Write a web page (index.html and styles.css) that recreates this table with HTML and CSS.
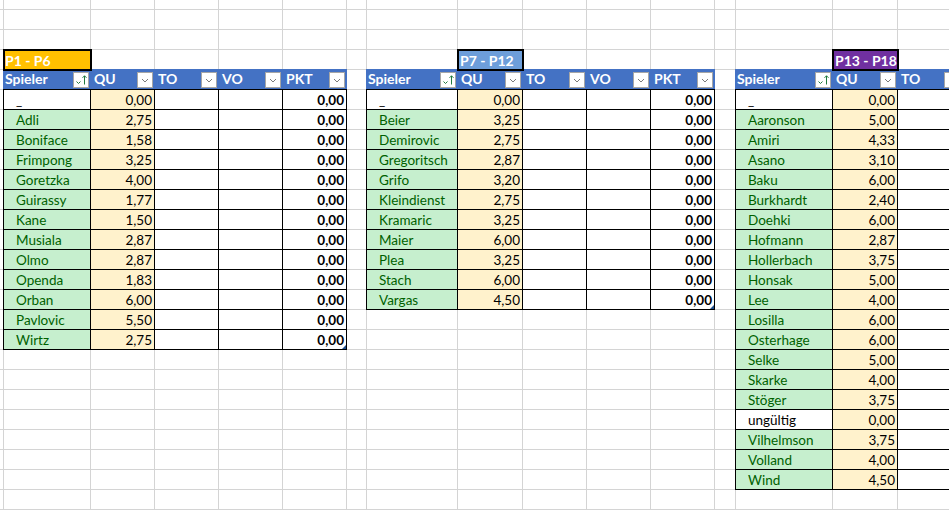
FILE: index.html
```html
<!DOCTYPE html>
<html lang="de">
<head>
<meta charset="utf-8">
<title>Spieler</title>
<link rel="stylesheet" href="styles.css">
</head>
<body>
<div class="sheet">
  <div class="lines">
    <span></span><span></span><span></span><span></span><span></span><span></span>
    <span></span><span></span><span></span><span></span><span></span><span></span>
    <span></span><span></span><span></span><span></span><span></span><span></span>
  </div>

  <!-- Table 1 -->
  <div class="tbl t1">
    <div class="thead">
      <div class="th">Spieler<svg class="btn" viewBox="0 0 16 16"><rect x="0.5" y="0.5" width="15" height="15" fill="#fff" stroke="#a6a6a6"/><path d="M3.5 9.5l2 2 2-2" fill="none" stroke="#1e7a3c"/><path d="M11.5 12.5V3.8M9.5 5.8l2-2 2 2" fill="none" stroke="#1e7a3c"/></svg></div>
      <div class="th">QU<svg class="btn" viewBox="0 0 16 16"><rect x="0.5" y="0.5" width="15" height="15" fill="#fff" stroke="#a6a6a6"/><path d="M5 7l3 3 3-3" fill="none" stroke="#7a7a7a"/></svg></div>
      <div class="th">TO<svg class="btn" viewBox="0 0 16 16"><rect x="0.5" y="0.5" width="15" height="15" fill="#fff" stroke="#a6a6a6"/><path d="M5 7l3 3 3-3" fill="none" stroke="#7a7a7a"/></svg></div>
      <div class="th">VO<svg class="btn" viewBox="0 0 16 16"><rect x="0.5" y="0.5" width="15" height="15" fill="#fff" stroke="#a6a6a6"/><path d="M5 7l3 3 3-3" fill="none" stroke="#7a7a7a"/></svg></div>
      <div class="th">PKT<svg class="btn" viewBox="0 0 16 16"><rect x="0.5" y="0.5" width="15" height="15" fill="#fff" stroke="#a6a6a6"/><path d="M5 7l3 3 3-3" fill="none" stroke="#7a7a7a"/></svg></div>
    </div>
    <div class="tbody">
      <div class="td name plain">_</div><div class="td qu">0,00</div><div class="td"></div><div class="td"></div><div class="td pkt">0,00</div>
      <div class="td name">Adli</div><div class="td qu">2,75</div><div class="td"></div><div class="td"></div><div class="td pkt">0,00</div>
      <div class="td name">Boniface</div><div class="td qu">1,58</div><div class="td"></div><div class="td"></div><div class="td pkt">0,00</div>
      <div class="td name">Frimpong</div><div class="td qu">3,25</div><div class="td"></div><div class="td"></div><div class="td pkt">0,00</div>
      <div class="td name">Goretzka</div><div class="td qu">4,00</div><div class="td"></div><div class="td"></div><div class="td pkt">0,00</div>
      <div class="td name">Guirassy</div><div class="td qu">1,77</div><div class="td"></div><div class="td"></div><div class="td pkt">0,00</div>
      <div class="td name">Kane</div><div class="td qu">1,50</div><div class="td"></div><div class="td"></div><div class="td pkt">0,00</div>
      <div class="td name">Musiala</div><div class="td qu">2,87</div><div class="td"></div><div class="td"></div><div class="td pkt">0,00</div>
      <div class="td name">Olmo</div><div class="td qu">2,87</div><div class="td"></div><div class="td"></div><div class="td pkt">0,00</div>
      <div class="td name">Openda</div><div class="td qu">1,83</div><div class="td"></div><div class="td"></div><div class="td pkt">0,00</div>
      <div class="td name">Orban</div><div class="td qu">6,00</div><div class="td"></div><div class="td"></div><div class="td pkt">0,00</div>
      <div class="td name">Pavlovic</div><div class="td qu">5,50</div><div class="td"></div><div class="td"></div><div class="td pkt">0,00</div>
      <div class="td name">Wirtz</div><div class="td qu">2,75</div><div class="td"></div><div class="td"></div><div class="td pkt last">0,00</div>
    </div>
  </div>

  <!-- Table 2 -->
  <div class="tbl t2">
    <div class="thead">
      <div class="th">Spieler<svg class="btn" viewBox="0 0 16 16"><rect x="0.5" y="0.5" width="15" height="15" fill="#fff" stroke="#a6a6a6"/><path d="M3.5 9.5l2 2 2-2" fill="none" stroke="#1e7a3c"/><path d="M11.5 12.5V3.8M9.5 5.8l2-2 2 2" fill="none" stroke="#1e7a3c"/></svg></div>
      <div class="th">QU<svg class="btn" viewBox="0 0 16 16"><rect x="0.5" y="0.5" width="15" height="15" fill="#fff" stroke="#a6a6a6"/><path d="M5 7l3 3 3-3" fill="none" stroke="#7a7a7a"/></svg></div>
      <div class="th">TO<svg class="btn" viewBox="0 0 16 16"><rect x="0.5" y="0.5" width="15" height="15" fill="#fff" stroke="#a6a6a6"/><path d="M5 7l3 3 3-3" fill="none" stroke="#7a7a7a"/></svg></div>
      <div class="th">VO<svg class="btn" viewBox="0 0 16 16"><rect x="0.5" y="0.5" width="15" height="15" fill="#fff" stroke="#a6a6a6"/><path d="M5 7l3 3 3-3" fill="none" stroke="#7a7a7a"/></svg></div>
      <div class="th">PKT<svg class="btn" viewBox="0 0 16 16"><rect x="0.5" y="0.5" width="15" height="15" fill="#fff" stroke="#a6a6a6"/><path d="M5 7l3 3 3-3" fill="none" stroke="#7a7a7a"/></svg></div>
    </div>
    <div class="tbody">
      <div class="td name plain">_</div><div class="td qu">0,00</div><div class="td"></div><div class="td"></div><div class="td pkt">0,00</div>
      <div class="td name">Beier</div><div class="td qu">3,25</div><div class="td"></div><div class="td"></div><div class="td pkt">0,00</div>
      <div class="td name">Demirovic</div><div class="td qu">2,75</div><div class="td"></div><div class="td"></div><div class="td pkt">0,00</div>
      <div class="td name">Gregoritsch</div><div class="td qu">2,87</div><div class="td"></div><div class="td"></div><div class="td pkt">0,00</div>
      <div class="td name">Grifo</div><div class="td qu">3,20</div><div class="td"></div><div class="td"></div><div class="td pkt">0,00</div>
      <div class="td name">Kleindienst</div><div class="td qu">2,75</div><div class="td"></div><div class="td"></div><div class="td pkt">0,00</div>
      <div class="td name">Kramaric</div><div class="td qu">3,25</div><div class="td"></div><div class="td"></div><div class="td pkt">0,00</div>
      <div class="td name">Maier</div><div class="td qu">6,00</div><div class="td"></div><div class="td"></div><div class="td pkt">0,00</div>
      <div class="td name">Plea</div><div class="td qu">3,25</div><div class="td"></div><div class="td"></div><div class="td pkt">0,00</div>
      <div class="td name">Stach</div><div class="td qu">6,00</div><div class="td"></div><div class="td"></div><div class="td pkt">0,00</div>
      <div class="td name">Vargas</div><div class="td qu">4,50</div><div class="td"></div><div class="td"></div><div class="td pkt last">0,00</div>
    </div>
  </div>

  <div class="tbl t3">
    <div class="thead">
      <div class="th">Spieler<svg class="btn" viewBox="0 0 16 16"><rect x="0.5" y="0.5" width="15" height="15" fill="#fff" stroke="#a6a6a6"/><path d="M3.5 9.5l2 2 2-2" fill="none" stroke="#1e7a3c"/><path d="M11.5 12.5V3.8M9.5 5.8l2-2 2 2" fill="none" stroke="#1e7a3c"/></svg></div>
      <div class="th">QU<svg class="btn" viewBox="0 0 16 16"><rect x="0.5" y="0.5" width="15" height="15" fill="#fff" stroke="#a6a6a6"/><path d="M5 7l3 3 3-3" fill="none" stroke="#7a7a7a"/></svg></div>
      <div class="th">TO<svg class="btn" viewBox="0 0 16 16"><rect x="0.5" y="0.5" width="15" height="15" fill="#fff" stroke="#a6a6a6"/><path d="M5 7l3 3 3-3" fill="none" stroke="#7a7a7a"/></svg></div>
    </div>
    <div class="tbody">
      <div class="td name plain">_</div><div class="td qu">0,00</div><div class="td"></div>
      <div class="td name">Aaronson</div><div class="td qu">5,00</div><div class="td"></div>
      <div class="td name">Amiri</div><div class="td qu">4,33</div><div class="td"></div>
      <div class="td name">Asano</div><div class="td qu">3,10</div><div class="td"></div>
      <div class="td name">Baku</div><div class="td qu">6,00</div><div class="td"></div>
      <div class="td name">Burkhardt</div><div class="td qu">2,40</div><div class="td"></div>
      <div class="td name">Doehki</div><div class="td qu">6,00</div><div class="td"></div>
      <div class="td name">Hofmann</div><div class="td qu">2,87</div><div class="td"></div>
      <div class="td name">Hollerbach</div><div class="td qu">3,75</div><div class="td"></div>
      <div class="td name">Honsak</div><div class="td qu">5,00</div><div class="td"></div>
      <div class="td name">Lee</div><div class="td qu">4,00</div><div class="td"></div>
      <div class="td name">Losilla</div><div class="td qu">6,00</div><div class="td"></div>
      <div class="td name">Osterhage</div><div class="td qu">6,00</div><div class="td"></div>
      <div class="td name">Selke</div><div class="td qu">5,00</div><div class="td"></div>
      <div class="td name">Skarke</div><div class="td qu">4,00</div><div class="td"></div>
      <div class="td name">Stöger</div><div class="td qu">3,75</div><div class="td"></div>
      <div class="td name plain">ungültig</div><div class="td qu">0,00</div><div class="td"></div>
      <div class="td name">Vilhelmson</div><div class="td qu">3,75</div><div class="td"></div>
      <div class="td name">Volland</div><div class="td qu">4,00</div><div class="td"></div>
      <div class="td name">Wind</div><div class="td qu">4,50</div><div class="td"></div>
    </div>
  </div>

  <div class="lbl l1">P1 - P6</div>
  <div class="lbl l2">P7 - P12</div>
  <div class="lbl l3">P13 - P18</div>
</div>
</body>
</html>
```

FILE: styles.css
```css
* { box-sizing: border-box; }

:root {
  --cols: 4px 87px 64px 64px 64px 64px 20px 91px 65px 64px 64px 64px 21px 97px 65px 64px 64px 64px;
  --grid: #d4d4d4;
}

html, body {
  margin: 0;
  padding: 0;
  background: #fff;
  overflow: hidden;
}

body {
  font-family: Lato, "Liberation Sans", sans-serif;
  font-size: 13.5px;
  color: #000;
}

.sheet {
  display: grid;
  grid-template-columns: var(--cols);
  grid-template-rows: 10px repeat(25, 20px);
  width: 1090px;
}

.lines {
  grid-area: 1 / 1 / -1 / -1;
  display: grid;
  grid-template-columns: var(--cols);
  background-image: linear-gradient(to bottom, transparent 19px, var(--grid) 19px);
  background-size: 100% 20px;
  background-position: 0 10px;
}

.lines span {
  border-right: 1px solid var(--grid);
}

.tbl {
  align-self: start;
  margin: -1px 0 0 -1px;
  display: flex;
  flex-direction: column;
}

.t1 { grid-column: 2 / 7; grid-row: 5 / 19; --tc: 87px 64px 64px 64px 64px; --hc: 88px 64px 64px 64px 64px; }
.t2 { grid-column: 8 / 13; grid-row: 5 / 17; --tc: 91px 65px 64px 64px 64px; --hc: 92px 65px 64px 64px 64px; }
.t3 { grid-column: 14 / 17; grid-row: 5 / 26; --tc: 97px 65px 64px; --hc: 98px 65px 64px; }

.thead {
  display: grid;
  grid-template-columns: var(--hc);
  height: 20px;
  background: #4472c4;
  color: #fff;
  font-weight: 700;
  font-size: 14px;
}

.th {
  display: flex;
  justify-content: space-between;
  align-items: flex-start;
  padding: 1px 2px 0 3px;
  line-height: 18px;
  white-space: nowrap;
}

.th:first-child { padding-left: 2px; }

.btn {
  flex: none;
  width: 16px;
  height: 16px;
  margin-top: 2px;
}

.tbody {
  display: grid;
  grid-template-columns: var(--tc);
  border-top: 1px solid #000;
  border-left: 1px solid #000;
}

.td {
  height: 20px;
  border-right: 1px solid #000;
  border-bottom: 1px solid #000;
  padding: 1px 2px 0 2px;
  line-height: 19px;
  white-space: nowrap;
  background: #fff;
}

.name {
  padding-left: 12px;
  background: #c6efce;
  color: #006100;
}

.name.plain {
  background: #fff;
  color: #000;
}

.qu {
  background: #fff2cc;
  text-align: right;
}

.pkt {
  text-align: right;
  font-weight: 700;
}

.last { position: relative; }

.last::after {
  content: "";
  position: absolute;
  right: 0;
  bottom: 0;
  width: 0;
  height: 0;
  border-left: 4px solid transparent;
  border-bottom: 4px solid #1f4e8c;
}

.lbl {
  margin: -1px;
  border: 2px solid #000;
  color: #fff;
  font-weight: 700;
  font-size: 14px;
  line-height: 19px;
  padding-left: 0;
  white-space: nowrap;
}

.l1 { grid-column: 2; grid-row: 4; background: #ffc000; }
.l2 { grid-column: 9; grid-row: 4; background: #6d9eda; padding-left: 1px; }
.l3 { grid-column: 15; grid-row: 4; background: #7030a0; padding-left: 1px; }
```
